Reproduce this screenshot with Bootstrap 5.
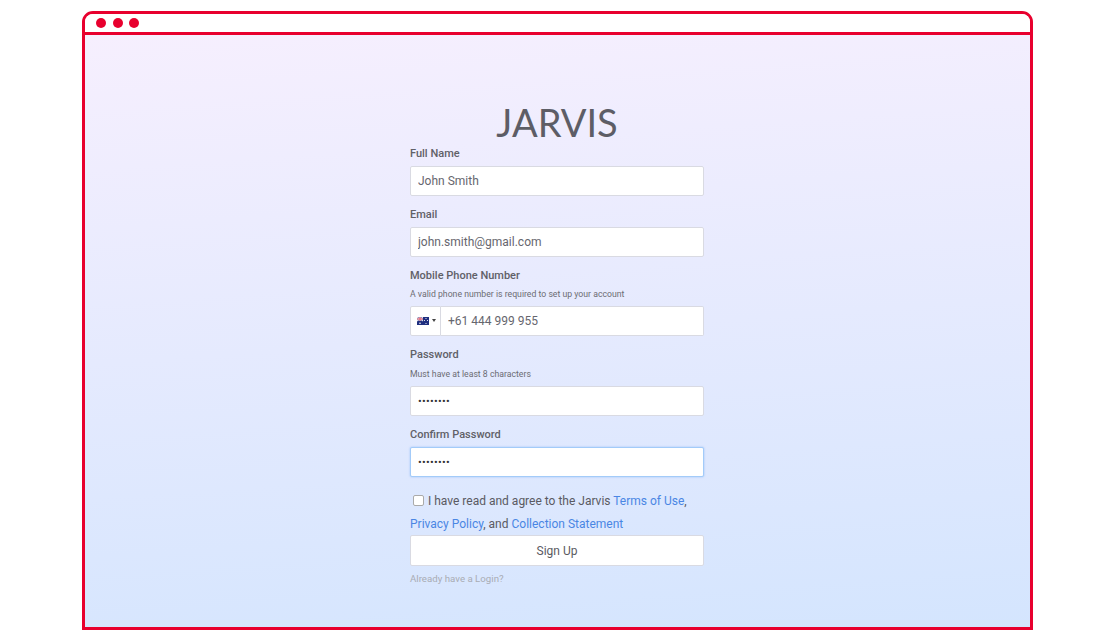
<!DOCTYPE html>
<html lang="en">
<head>
<meta charset="utf-8">
<title>Jarvis Sign Up</title>
<link href="https://cdn.jsdelivr.net/npm/bootstrap@5.3.0/dist/css/bootstrap.min.css" rel="stylesheet">
<style>
body{background:#fff;font-family:Roboto,"Liberation Sans",sans-serif;color:#58585f;font-size:12px}
.app-window{width:951px;height:619px;margin:11px 0 0 82px;border:3px solid #e8002e;border-radius:11px 11px 0 0;overflow:hidden}
.app-bar{height:21px;border-bottom:3px solid #e8002e;padding-left:11px;gap:6.5px;background:#fff}
.app-dot{width:10px;height:10px;border-radius:50%;background:#e8002e}
.app-main{height:595px;padding-right:1px;background:linear-gradient(176deg,#f6effe 0%,#d4e5fe 100%)}
.signup{width:294px;padding-top:65px}
.brand{font-family:"Lato",sans-serif;font-weight:400;font-size:38px;line-height:44px;margin:0;color:#5d5d66;text-align:center}
.fld{margin-bottom:9px}
.fld .form-label{font-size:11px;font-weight:500;line-height:17px;margin:0 0 4px;color:#606067;display:block;padding-top:1px}
.fld .hint{font-size:8.7px;line-height:13px;color:#6c6c73;margin:0 0 4.5px;padding-top:4px}
.fld .hint.pw-hint{margin-bottom:5.5px;padding-top:5px}
.fld .form-control{height:30px;border:1px solid #d9dae2;border-radius:2px;padding:0 7px;font-size:12px;font-weight:400;color:#66666e;background:#fff;box-shadow:none;font-family:Roboto,sans-serif}
.fld .form-control.pw{font-size:11px;letter-spacing:.3px;color:#333}
.fld .form-control.on{border-color:#a3cbf9;box-shadow:0 0 2px rgba(120,175,245,.7)}
.flag-btn{width:31px;height:30px;background:#fff;border:1px solid #d9dae2;border-radius:2px 0 0 2px;gap:3px;padding-left:6px}
.fld .input-group>.form-control{border-left:0;border-radius:0 2px 2px 0;padding-left:7px}
.tri{width:0;height:0;border-left:2.5px solid transparent;border-right:2.5px solid transparent;border-top:3px solid #444}
.agree{font-size:12px;line-height:22.5px;margin:13px 0 0;color:#5a5a62;padding:0;white-space:nowrap}
.agree .form-check-input{width:11px;height:11px;margin:0 4px 0 3px;float:none;vertical-align:-1px;border:1px solid #aaa;border-radius:2px;background-color:#fff;display:inline-block;position:static}
.agree a{color:#4a86e4;text-decoration:none}
.go{height:31px;width:100%;background:#fff;border:1px solid #d9dae2;border-radius:2px;font-size:12px;color:#5a5a62;padding:0;margin-top:0}
.login-link{font-size:9.7px;color:#a9acb4;text-decoration:none;display:block;margin-top:6px;line-height:13px}
</style>
</head>
<body>
<div class="app-window d-flex flex-column">
  <div class="app-bar d-flex align-items-center flex-shrink-0">
    <span class="app-dot"></span><span class="app-dot"></span><span class="app-dot"></span>
  </div>
  <div class="app-main">
    <form class="signup mx-auto">
      <h1 class="brand">JARVIS</h1>
      <div class="fld">
        <label class="form-label">Full Name</label>
        <input class="form-control" type="text" value="John Smith">
      </div>
      <div class="fld">
        <label class="form-label">Email</label>
        <input class="form-control" type="text" value="john.smith@gmail.com">
      </div>
      <div class="fld">
        <label class="form-label mb-0">Mobile Phone Number</label>
        <p class="hint">A valid phone number is required to set up your account</p>
        <div class="input-group">
          <span class="flag-btn d-flex align-items-center justify-content-start">
            <svg width="12" height="8" viewBox="0 0 24 16"><rect width="24" height="16" fill="#1f2f7f"/><path d="M0 0L12 8M12 0L0 8" stroke="#fff" stroke-width="2"/><path d="M6 0V8M0 4H12" stroke="#fff" stroke-width="3"/><path d="M6 0V8M0 4H12" stroke="#d8243c" stroke-width="1.5"/><circle cx="6" cy="12.5" r="1.6" fill="#fff"/><circle cx="18" cy="3" r="1.2" fill="#fff"/><circle cx="15" cy="7" r="1.2" fill="#fff"/><circle cx="21" cy="7" r="1.2" fill="#fff"/><circle cx="18" cy="13" r="1.2" fill="#fff"/></svg>
            <span class="tri"></span>
          </span>
          <input class="form-control ms-0" type="text" value="+61 444 999 955">
        </div>
      </div>
      <div class="fld">
        <label class="form-label mb-0">Password</label>
        <p class="hint pw-hint">Must have at least 8 characters</p>
        <input class="form-control pw" type="password" value="password">
      </div>
      <div class="fld">
        <label class="form-label">Confirm Password</label>
        <input class="form-control pw on" type="password" value="password">
      </div>
      <p class="agree form-check"><input class="form-check-input" type="checkbox">I have read and agree to the Jarvis <a href="#">Terms of Use</a>,<br><a href="#">Privacy Policy</a>, and <a href="#">Collection Statement</a></p>
      <button class="btn go" type="button">Sign Up</button>
      <a class="login-link" href="#">Already have a Login?</a>
    </form>
  </div>
</div>
<script src="https://cdn.jsdelivr.net/npm/bootstrap@5.3.0/dist/js/bootstrap.bundle.min.js"></script>
</body>
</html>
